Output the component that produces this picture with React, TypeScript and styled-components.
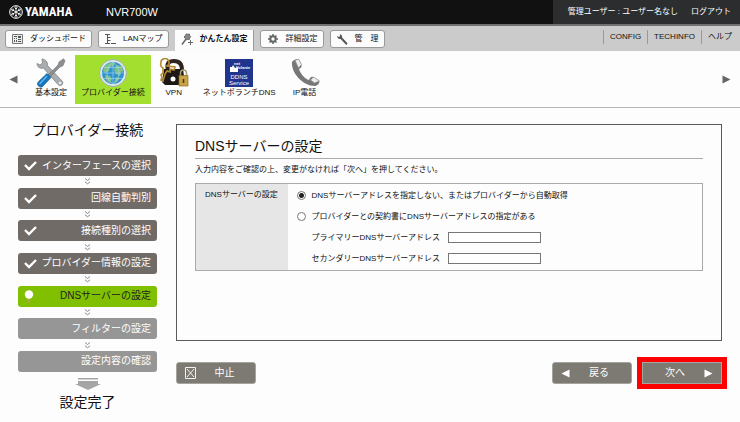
import React from "react";
import styled, { createGlobalStyle, css } from "styled-components";

const GlobalStyle = createGlobalStyle`
  * { box-sizing: border-box; }
  body {
    margin: 0;
    background: #fdfdfd;
    color: #111;
    font: 8px/12px "Liberation Sans", "Noto Sans CJK JP", sans-serif;
  }
  button, input { font: inherit; color: inherit; }
  a { color: inherit; text-decoration: none; }
  svg { flex-shrink: 0; }
`;

const Header = styled.header`
  display: flex;
  align-items: stretch;
  height: 26px;
  background: #111;
  border-bottom: 2px solid #707070;
  color: #fff;
`;
const Brand = styled.div`
  display: flex;
  align-items: center;
  gap: 2px;
  width: 106px;
  padding-left: 9px;
`;
const BrandName = styled.span`
  font: bold 13px/24px "Roboto Condensed", "Open Sans Condensed", "Noto Sans ExtraCondensed", "Noto Sans Condensed", "Liberation Serif", sans-serif;
`;
const Model = styled.span`
  flex: 1;
  font-size: 11px;
  line-height: 24px;
`;
const Account = styled.div`
  display: flex;
  align-items: center;
  gap: 13px;
  padding: 0 9px 0 15px;
  background: #2b2d2e;
`;

const NavBar = styled.div`
  display: flex;
  justify-content: space-between;
  height: 25px;
  padding: 4px 8px 0 5px;
  background: #cbcbcb;
`;
const Tabs = styled.nav`
  display: flex;
  gap: 6px;
`;
const Tab = styled.button<{ $active?: boolean }>`
  display: flex;
  align-items: center;
  gap: 7px;
  height: 18px;
  padding: 0 5px 0 6px;
  border: 1px solid #999;
  border-radius: 3px;
  background: #fcfcfc;
  white-space: nowrap;
  ${(p) =>
    p.$active &&
    css`
      height: 21px;
      padding-bottom: 3px;
      border-width: 0 1px 0 0;
      border-radius: 0;
      font-weight: bold;
    `}
`;
const Links = styled.nav`
  display: flex;
  height: 14px;
  line-height: 14px;
  a {
    padding: 0 6px;
    border-left: 1px solid #999;
  }
  a:last-child { padding-right: 0; }
`;

const Toolbar = styled.div`
  display: flex;
  align-items: center;
  height: 57px;
  padding: 0 9px;
  border-bottom: 1px solid #b5b5b5;
`;
const Items = styled.div`
  display: flex;
  flex: 1;
  gap: 2px;
  padding-left: 11px;
`;
const Item = styled.button<{ $active?: boolean }>`
  display: flex;
  flex-direction: column;
  align-items: center;
  min-width: 42px;
  height: 49px;
  padding: 3px 6px 0;
  border: 0;
  background: ${(p) => (p.$active ? "#a3df2e" : "transparent")};
  line-height: 10px;
  white-space: nowrap;
`;
const Arrow = styled.button`
  display: flex;
  padding: 0;
  border: 0;
  background: none;
`;

const Page = styled.div`
  display: flex;
  gap: 19px;
  padding: 16px 18px 0;
`;
const Sidebar = styled.aside`
  display: flex;
  flex-direction: column;
  align-items: center;
  width: 139px;
`;
const SideTitle = styled.h2`
  margin: 0 0 19px;
  font-size: 14px;
  font-weight: normal;
  line-height: 12px;
  white-space: nowrap;
`;
const Steps = styled.ol`
  display: flex;
  flex-direction: column;
  align-items: center;
  justify-content: space-between;
  width: 100%;
  min-height: 217px;
  margin: 0 0 6px;
  padding: 0;
  list-style: none;
`;
const Connector = styled.li`
  display: flex;
`;
const tones = {
  done: css`background: #716b67; color: #fff;`,
  current: css`background: #80c000; color: #222;`,
  next: css`background: #969696; color: #fff;`,
};
const Step = styled.li<{ $tone: keyof typeof tones }>`
  display: flex;
  align-items: center;
  justify-content: space-between;
  width: 100%;
  height: 21px;
  padding: 0 6px;
  border-radius: 3px;
  font-size: 10px;
  line-height: 20px;
  white-space: nowrap;
  ${(p) => tones[p.$tone]}
`;
const Finish = styled.p`
  margin: 2px 0 0;
  font-size: 14px;
  line-height: 18px;
`;

const Main = styled.main`
  flex: 1;
  min-width: 0;
`;
const Panel = styled.section`
  min-height: 217px;
  padding: 11px 18px;
  border: 1px solid #5a5a5a;
`;
const Heading = styled.h1`
  margin: 0;
  padding-bottom: 2px;
  border-bottom: 1px solid #aaa;
  font-size: 14px;
  font-weight: normal;
  line-height: 20px;
`;
const Note = styled.p`
  margin: 5px 0 7px;
`;
const Settings = styled.table`
  width: 100%;
  border: 1px solid #aaa;
  border-collapse: collapse;
  th {
    width: 92px;
    padding: 5px 9px;
    background: #e6e6e6;
    font-weight: normal;
    text-align: left;
    vertical-align: top;
    white-space: nowrap;
  }
  td { padding: 1px 9px; }
`;
const Choice = styled.label`
  display: flex;
  align-items: center;
  gap: 6px;
  height: 21px;
`;
const Radio = styled.input`
  appearance: none;
  width: 9px;
  height: 9px;
  margin: 0;
  border: 1px solid #777;
  border-radius: 50%;
  background: #fff;
  &:checked { background: radial-gradient(circle, #222 2px, #fff 3px); }
`;
const Field = styled.label`
  display: grid;
  grid-template-columns: 136px 93px;
  align-items: center;
  height: 21px;
  padding-left: 15px;
`;
const TextBox = styled.input`
  width: 100%;
  height: 11px;
  padding: 0 2px;
  border: 1px solid #777;
  background: #fff;
`;

const Actions = styled.div`
  display: flex;
  gap: 10px;
  margin-top: 21px;
`;
const Action = styled.button<{ $push?: boolean; $forward?: boolean }>`
  display: flex;
  flex-direction: ${(p) => (p.$forward ? "row-reverse" : "row")};
  align-items: center;
  gap: 5px;
  width: 80px;
  height: 22px;
  padding: 0 8px;
  border: 1px solid #a5a5a0;
  border-radius: 3px;
  background: #7d7a73;
  color: #fff;
  font-size: 10px;
  ${(p) => p.$push && css`margin-right: auto;`}
  ${(p) =>
    p.$forward &&
    css`
      border-radius: 0;
      outline: 5px solid #f00;
    `}
  span { flex: 1; }
`;

const Emblem = () => (
  <svg width="14" height="14" viewBox="0 0 14 14" fill="none" stroke="#fff" aria-hidden="true">
    <circle cx="7" cy="7" r="6.3" />
    <g strokeWidth=".9">
      <path d="M7 1v12M2 4l10 6M2 10l10-6" />
      <path d="M5.6 2.5 7 4l1.4-1.5M5.6 11.5 7 10l1.4 1.5M2.5 6l2-.5L4 3.5M11.5 8l-2 .5.5 2M2.5 8l2 .5-.5 2M11.5 6l-2-.5.5-2" />
    </g>
  </svg>
);
const DashboardIcon = () => (
  <svg width="11" height="10" viewBox="0 0 11 10" aria-hidden="true">
    <path d="M.5.5h10v9H.5z" fill="#eee" stroke="#777" />
    <path d="M2 2h3v1H2zM6 2h3v2H6zM2 4h1v1H2zM4 4h1v1H4zM2 6h1v2H2zM4 6h1v2H4zM6 5h3v1H6zM6 7h3v1H6z" fill="#555" />
  </svg>
);
const MapIcon = () => (
  <svg width="11" height="12" viewBox="0 0 11 12" fill="none" stroke="#555" aria-hidden="true">
    <path d="M0 1.500h5M2.500 1.500v9M0 10.500h5M2.500 4.500h3M2.500 7.500h3M6 10.500h5" />
  </svg>
);
const WandIcon = () => (
  <svg width="12" height="13" viewBox="0 0 12 13" fill="none" stroke="#666" aria-hidden="true">
    <path d="M5 6 1 11.500" strokeWidth="1.500" />
    <path d="m5.500 .8 1.300.6 1.500-.4.4 1.600 1 1.200-1.100 1.200-.3 1.500-1.600-.2-1.500.6-.8-1.500L3.200 4l1-1.300z" fill="#888" />
    <path d="M9.500 7v5M7 9.500h5" />
  </svg>
);
const GearIcon = () => (
  <svg width="12" height="12" viewBox="-6 -6 12 12" fill="none" stroke="#666" aria-hidden="true">
    <circle r="2.700" strokeWidth="2" />
    <path d="M0-5V-3M0 5V3M-5 0h2M5 0H3M-3.500-3.500l1.300 1.300M3.500 3.500 2.200 2.200M3.500-3.500 2.200-2.200M-3.500 3.500l1.300-1.300" strokeWidth="1.500" />
  </svg>
);
const WrenchIcon = () => (
  <svg width="11" height="11" viewBox="0 0 11 11" aria-hidden="true">
    <path d="M3 .3 2.900 2.500 1.900 3 .3 1.800C0 4 1.500 5.400 3.600 5L8.800 10.500c1 .6 2-.5 1.400-1.500L5.100 3.600C5.400 1.900 4.500.6 3 .3z" fill="#555" />
  </svg>
);
const ToolsIcon = () => (
  <svg width="30" height="30" viewBox="0 0 30 30" aria-hidden="true">
    <path d="M6 1 6.500 5 4 7 1 5.500C1 9 4 11 7.500 10L22 26.500c2 2.500 6 .2 4.500-3L11.500 7.500C12 4 9.500 1.500 6 1z" fill="#a9adaf" stroke="#747a7d" strokeWidth=".7" />
    <circle cx="24" cy="25" r="1.300" fill="#eee" />
    <path d="m27.500.8 1.500 2-2 5-3 1.200L13 20l-2-2L22 7l1-3z" fill="#8b8f92" stroke="#666" strokeWidth=".5" />
    <path d="m11 15.500 4 4-8.500 9C4 30.500 0 27 2.200 24z" fill="#1678be" stroke="#0d4f87" strokeWidth=".7" />
    <path d="m11 18-7.500 8" stroke="#65b8ee" strokeWidth="1.500" />
  </svg>
);
const GlobeIcon = () => (
  <svg width="30" height="30" viewBox="0 0 30 30" aria-hidden="true">
    <circle cx="15" cy="15" r="13.500" fill="#dde6e2" stroke="#9ab3ae" />
    <circle cx="15" cy="15" r="11" fill="#2f91cf" />
    <path d="M6 9c3-4 7-5 11-4l-1 3-4 1-1 4-4 2-2-2zM18 7l5 1 3 5-3 1-1 4-4-2-2-4zM7 17l5 1 2 3-2 4c-3-1-5-4-5-8zM18 19l4 1-3 4-3 1z" fill="#7fbf8a" />
    <path d="M4 15h22M15 4v22M6 9.500h18M6 20.500h18M15 4c-8 6-8 16 0 22M15 4c8 6 8 16 0 22" fill="none" stroke="#a6def3" strokeWidth=".6" />
  </svg>
);
const VpnIcon = () => (
  <svg width="30" height="30" viewBox="0 0 30 30" aria-hidden="true">
    <path d="M9 12C7 5 10 3 15 3s8 3 8 9" fill="none" stroke="#30231e" strokeWidth="4" />
    <path d="M5 11h19l2 14-4 2H6l-3-3z" fill="#1d1716" />
    <circle cx="14" cy="21" r="2.500" fill="#fff" />
    <path d="M2 5a4 4 0 1 1 6 3l8 1-1 3-4-1v3l-3-1-2 3-2 7-2-1 1-3-1-2 2-2v-5A4 4 0 0 1 2 5z" fill="none" stroke="#b58a32" strokeWidth="1.600" />
    <path d="M21.500 18v-3c0-4 6-4 6 0v3" fill="none" stroke="#aaa083" strokeWidth="1.500" />
    <path d="M20 17.500h9V28h-9z" fill="#c8a247" stroke="#8f6b22" strokeWidth=".7" />
    <path d="M24.500 21v4" stroke="#4b3511" strokeWidth="1.500" />
  </svg>
);
const DdnsIcon = () => (
  <svg width="30" height="30" viewBox="0 0 30 30" fontFamily="Liberation Sans" fill="#fff" aria-hidden="true">
    <path d="M1 1h28v28H1z" fill="#20358e" />
    <path d="M6 9h2l1-2 2 3 3-1v5H6z" />
    <text x="10" y="7" fontSize="4" fontWeight="bold">net</text>
    <text x="12" y="11" fontSize="4" fontWeight="bold">Volante</text>
    <text x="15" y="21" fontSize="6" textAnchor="middle">DDNS</text>
    <text x="15" y="27" fontSize="6" textAnchor="middle">Service</text>
  </svg>
);
const PhoneIcon = () => (
  <svg width="30" height="30" viewBox="0 0 30 30" aria-hidden="true">
    <path d="M2 4C1 15 13 28 25 28c3-.5 5-3 4-5l-6-4c-2-1-3 1-4 3-4-1-9-7-10-11 2-1 3-2 2.500-4L9 2C7 0 3 2 2 4z" fill="#777" />
    <path d="M5 2.500 8.500 1 11.500 6.500 8.500 10zM20.500 22l3-3 6 4-5 2z" fill="#eee" stroke="#888" strokeWidth=".7" />
  </svg>
);
const Triangle = ({ right, color = "#fff" }: { right?: boolean; color?: string }) => (
  <svg width="9" height="9" viewBox="0 0 9 9" fill={color} aria-hidden="true">
    <path d={right ? "M.5.5v8l8-4z" : "M8.500.5v8l-8-4z"} />
  </svg>
);
const Check = () => (
  <svg width="13" height="11" viewBox="0 0 13 11" fill="none" stroke="#fff" strokeWidth="2.400" aria-hidden="true">
    <path d="m1 5 4 4 7-7" />
  </svg>
);
const Pin = () => (
  <svg width="11" height="15" viewBox="0 0 11 15" aria-hidden="true">
    <path d="M5 9v5" stroke="#b7a34b" strokeWidth="2" />
    <circle cx="5" cy="5.500" r="4.200" fill="#fff" />
  </svg>
);
const Chevrons = () => (
  <svg width="7" height="7" viewBox="0 0 7 7" fill="none" stroke="#888" aria-hidden="true">
    <path d="m1 .5 2.500 2L6 .5M1 3.800l2.500 2L6 3.800" />
  </svg>
);
const DownArrow = () => (
  <svg width="26" height="13" viewBox="0 0 26 13" fill="#a5a5a5" aria-hidden="true">
    <path d="M3 0h20v1.500H3zM3 3h20v3h3l-13 6L0 6h3z" />
  </svg>
);
const CancelIcon = () => (
  <svg width="12" height="12" viewBox="0 0 12 12" fill="none" stroke="#fff" strokeWidth=".9" aria-hidden="true">
    <path d="M.5.5h10v11H.5zM2 2l7 8M9 2l-7 8" />
  </svg>
);

const steps: { label: string; tone: keyof typeof tones }[] = [
  { label: "インターフェースの選択", tone: "done" },
  { label: "回線自動判別", tone: "done" },
  { label: "接続種別の選択", tone: "done" },
  { label: "プロバイダー情報の設定", tone: "done" },
  { label: "DNSサーバーの設定", tone: "current" },
  { label: "フィルターの設定", tone: "next" },
  { label: "設定内容の確認", tone: "next" },
];

export default function App() {
  return (
    <>
      <GlobalStyle />
      <Header>
        <Brand><Emblem /><BrandName>YAMAHA</BrandName></Brand>
        <Model>NVR700W</Model>
        <Account><span>管理ユーザー : ユーザー名なし</span><a href="#logout">ログアウト</a></Account>
      </Header>
      <NavBar>
        <Tabs>
          <Tab><DashboardIcon />ダッシュボード</Tab>
          <Tab><MapIcon />LANマップ</Tab>
          <Tab $active><WandIcon />かんたん設定</Tab>
          <Tab><GearIcon />詳細設定</Tab>
          <Tab><WrenchIcon />管　理</Tab>
        </Tabs>
        <Links>
          <a href="#config">CONFIG</a>
          <a href="#techinfo">TECHINFO</a>
          <a href="#help">ヘルプ</a>
        </Links>
      </NavBar>
      <Toolbar>
        <Arrow aria-label="前へ"><Triangle color="#666" /></Arrow>
        <Items>
          <Item><ToolsIcon />基本設定</Item>
          <Item $active><GlobeIcon />プロバイダー接続</Item>
          <Item><VpnIcon />VPN</Item>
          <Item><DdnsIcon />ネットボランチDNS</Item>
          <Item><PhoneIcon />IP電話</Item>
        </Items>
        <Arrow aria-label="次へ"><Triangle right color="#666" /></Arrow>
      </Toolbar>
      <Page>
        <Sidebar>
          <SideTitle>プロバイダー接続</SideTitle>
          <Steps>
            {steps.map((s, i) => (
              <React.Fragment key={s.label}>
                {i > 0 && <Connector aria-hidden="true"><Chevrons /></Connector>}
                <Step $tone={s.tone}>
                  {s.tone === "done" ? <Check /> : s.tone === "current" ? <Pin /> : <i />}
                  {s.label}
                </Step>
              </React.Fragment>
            ))}
          </Steps>
          <DownArrow />
          <Finish>設定完了</Finish>
        </Sidebar>
        <Main>
          <Panel>
            <Heading>DNSサーバーの設定</Heading>
            <Note>入力内容をご確認の上、変更がなければ「次へ」を押してください。</Note>
            <Settings>
              <tbody>
                <tr>
                  <th scope="row">DNSサーバーの設定</th>
                  <td>
                    <Choice><Radio type="radio" name="dns" defaultChecked />DNSサーバーアドレスを指定しない、またはプロバイダーから自動取得</Choice>
                    <Choice><Radio type="radio" name="dns" />プロバイダーとの契約書にDNSサーバーアドレスの指定がある</Choice>
                    <Field>プライマリーDNSサーバーアドレス<TextBox type="text" /></Field>
                    <Field>セカンダリーDNSサーバーアドレス<TextBox type="text" /></Field>
                  </td>
                </tr>
              </tbody>
            </Settings>
          </Panel>
          <Actions>
            <Action $push><CancelIcon /><span>中止</span></Action>
            <Action><Triangle /><span>戻る</span></Action>
            <Action $forward><Triangle right /><span>次へ</span></Action>
          </Actions>
        </Main>
      </Page>
    </>
  );
}
